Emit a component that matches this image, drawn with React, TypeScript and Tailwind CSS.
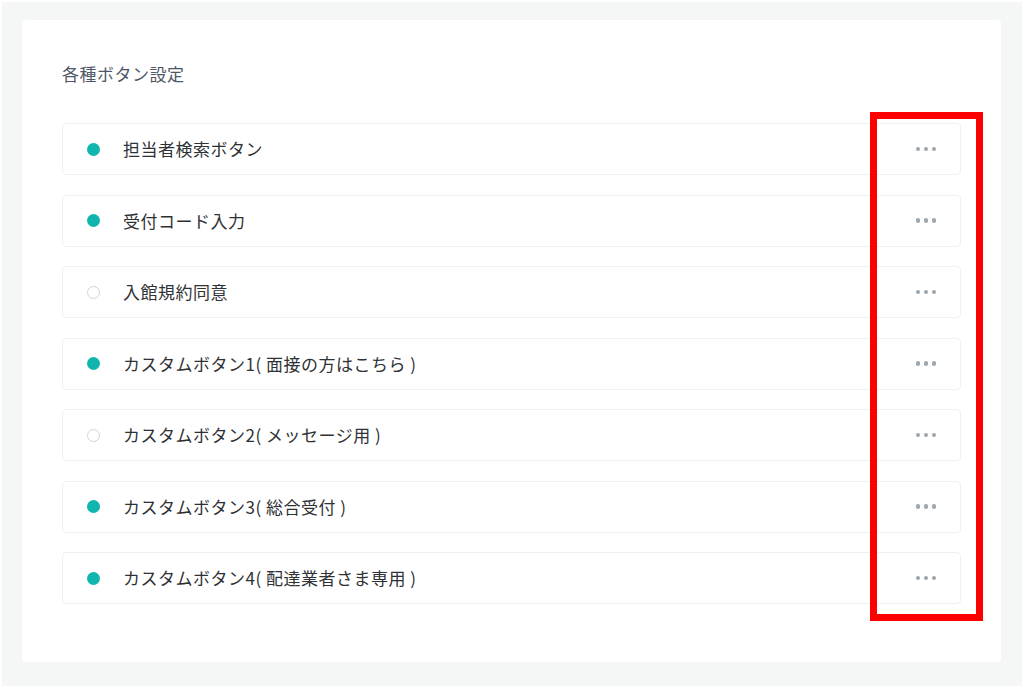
const buttons = [
  { label: "担当者検索ボタン", active: true },
  { label: "受付コード入力", active: true },
  { label: "入館規約同意", active: false },
  { label: "カスタムボタン1( 面接の方はこちら )", active: true },
  { label: "カスタムボタン2( メッセージ用 )", active: false },
  { label: "カスタムボタン3( 総合受付 )", active: true },
  { label: "カスタムボタン4( 配達業者さま専用 )", active: true },
];

function MoreDots() {
  return (
    <div className="flex items-center gap-[3.5px]">
      <span className="w-[4.5px] h-[4.5px] rounded-full bg-[#9aa6ad]" />
      <span className="w-[4.5px] h-[4.5px] rounded-full bg-[#9aa6ad]" />
      <span className="w-[4.5px] h-[4.5px] rounded-full bg-[#9aa6ad]" />
    </div>
  );
}

function ButtonRow({ label, active }: { label: string; active: boolean }) {
  return (
    <div className="h-[52px] flex items-center pl-6 pr-[24px] border border-[#edf1f1] rounded-[4px] bg-white">
      {active ? (
        <span className="w-[13px] h-[13px] rounded-full bg-[#10b6ad] shrink-0" />
      ) : (
        <span className="w-[13px] h-[13px] rounded-full border-[1.5px] border-[#d0d4d5] shrink-0" />
      )}
      <span className="ml-[23px] text-[17px] leading-[24px] tracking-[0.5px] text-[#2f3235]">{label}</span>
      <div className="ml-auto">
        <MoreDots />
      </div>
    </div>
  );
}

export default function App() {
  return (
    <div
      className="w-[1024px] h-[688px] bg-white p-[2px] relative"
      style={{ fontFamily: '"Noto Sans CJK JP", "Noto Sans", sans-serif' }}
    >
      <div className="w-full h-full bg-[#f5f7f7] pt-[18px] pl-[20px] pr-[21px] pb-[24px] flex">
        {/* ==== CARD ==== */}
        <div className="flex-1 bg-white rounded-[4px] pt-[42px] px-[40px]">
          <h2 className="text-[17px] leading-[24px] tracking-[0.5px] text-[#4f5766] font-normal mb-[37px]">
            各種ボタン設定
          </h2>
          <div className="flex flex-col gap-[19.5px]">
            {buttons.map((b) => (
              <ButtonRow key={b.label} label={b.label} active={b.active} />
            ))}
          </div>
        </div>
      </div>
      {/* ==== HIGHLIGHT ==== */}
      <div className="absolute left-[870px] top-[112px] w-[113px] h-[509px] border-[7px] border-[#ff0000] pointer-events-none" />
    </div>
  );
}
